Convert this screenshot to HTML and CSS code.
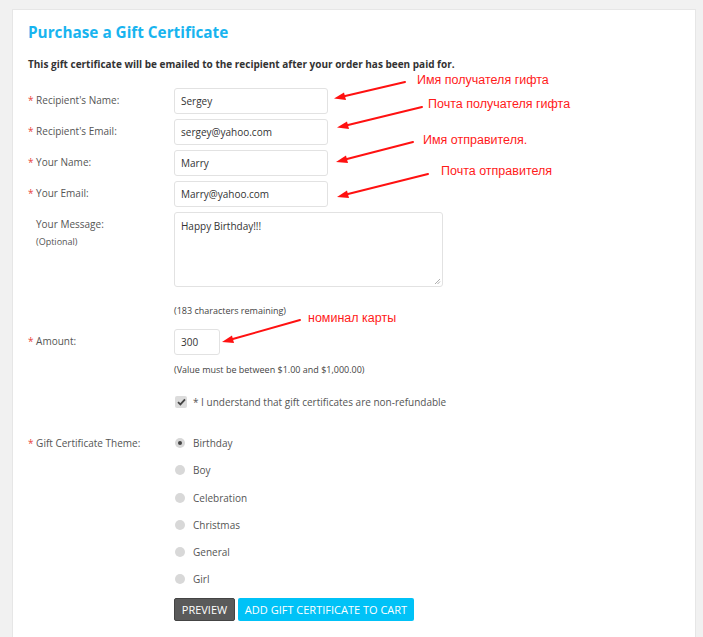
FILE: index.html
```html
<!DOCTYPE html>
<html>
<head>
<meta charset="utf-8">
<link rel="stylesheet" href="styles.css">
</head>
<body>
<div class="page">
  <div class="panel">
    <h1 class="title">Purchase a Gift Certificate</h1>
    <p class="intro">This gift certificate will be emailed to the recipient after your order has been paid for.</p>
    <div class="form">
      <div class="row row-input">
        <div class="label"><span class="req">*</span> Recipient's Name:</div>
        <div class="field"><div class="input">Sergey</div></div>
      </div>
      <div class="row row-input">
        <div class="label"><span class="req">*</span> Recipient's Email:</div>
        <div class="field"><div class="input">sergey@yahoo.com</div></div>
      </div>
      <div class="row row-input">
        <div class="label"><span class="req">*</span> Your Name:</div>
        <div class="field"><div class="input">Marry</div></div>
      </div>
      <div class="row row-input">
        <div class="label"><span class="req">*</span> Your Email:</div>
        <div class="field"><div class="input">Marry@yahoo.com</div></div>
      </div>
      <div class="row row-message">
        <div class="label label-plain">Your Message:<br><span class="opt">(Optional)</span></div>
        <div class="field">
          <div class="textarea">Happy Birthday!!!
            <svg class="grip" width="7" height="7" viewBox="0 0 7 7"><path d="M6 1 L1 6 M6 3.5 L3.5 6" stroke="#999" stroke-width="0.8"/></svg>
          </div>
          <div class="hint hint-chars">(183 characters remaining)</div>
        </div>
      </div>
      <div class="row row-amount">
        <div class="label"><span class="req">*</span> Amount:</div>
        <div class="field">
          <div class="input input-amount">300</div>
          <div class="hint hint-value">(Value must be between $1.00 and $1,000.00)</div>
          <div class="check-line">
            <span class="checkbox"><svg width="9" height="8" viewBox="0 0 9 8"><path d="M1 4.2 L3.4 6.4 L8 1.4" fill="none" stroke="#444" stroke-width="1.8"/></svg></span>
            <span class="check-text">* I understand that gift certificates are non-refundable</span>
          </div>
        </div>
      </div>
      <div class="row row-theme">
        <div class="label"><span class="req">*</span> Gift Certificate Theme:</div>
        <div class="field">
          <div class="radios">
            <div class="radio-line"><span class="radio checked"></span><span>Birthday</span></div>
            <div class="radio-line"><span class="radio"></span><span>Boy</span></div>
            <div class="radio-line"><span class="radio"></span><span>Celebration</span></div>
            <div class="radio-line"><span class="radio"></span><span>Christmas</span></div>
            <div class="radio-line"><span class="radio"></span><span>General</span></div>
            <div class="radio-line"><span class="radio"></span><span>Girl</span></div>
          </div>
          <div class="buttons">
            <span class="btn btn-preview">PREVIEW</span>
            <span class="btn btn-add">ADD GIFT CERTIFICATE TO CART</span>
          </div>
        </div>
      </div>
    </div>
  </div>

  <div class="annotations">
    <svg class="arrows" width="703" height="637" viewBox="0 0 703 637">
      <g stroke="#ff1111" stroke-width="2" fill="#ff1111" stroke-linecap="round">
        <line x1="405" y1="82" x2="343" y2="96.5"/>
        <polygon points="334,98.5 344,92.5 346,100" stroke="none"/>
        <line x1="422" y1="107" x2="346" y2="125.5"/>
        <polygon points="337,127.5 347,121.5 349,129" stroke="none"/>
        <line x1="413" y1="142" x2="345" y2="159.5"/>
        <polygon points="336,162 346,155.5 348,163" stroke="none"/>
        <line x1="428" y1="174" x2="346" y2="194.5"/>
        <polygon points="337,197 347,190.5 349,198" stroke="none"/>
        <line x1="300" y1="320" x2="231" y2="339.5"/>
        <polygon points="222,342 232,335.5 234,343" stroke="none"/>
      </g>
    </svg>
    <div class="note note-1">Имя получателя гифта</div>
    <div class="note note-2">Почта получателя гифта</div>
    <div class="note note-3">Имя отправителя.</div>
    <div class="note note-4">Почта отправителя</div>
    <div class="note note-5">номинал карты</div>
  </div>
</div>
</body>
</html>
```
FILE: styles.css
```css
* { box-sizing: border-box; }
html, body { margin: 0; padding: 0; }
body {
  background: #f1f1f1;
  font-family: "Open Sans", "DejaVu Sans", sans-serif;
  color: #555;
  width: 703px;
  height: 637px;
  overflow: hidden;
}
.page {
  position: relative;
  width: 703px;
  height: 637px;
  padding: 9px 7px 0 12px;
}
.panel {
  background: #fff;
  border: 1px solid #e6e6e6;
  border-bottom: none;
  height: 628px;
  padding: 12px 16px 0 15px;
}
.title {
  margin: 0;
  font-size: 15.3px;
  line-height: 20px;
  font-weight: 700;
  color: #18b4ef;
}
.intro {
  margin: 15px 0 0;
  font-size: 10px;
  line-height: 14px;
  font-weight: 700;
  color: #333;
}
.form {
  margin-top: 17px;
  display: flex;
  flex-direction: column;
}
.row {
  display: flex;
}
.label {
  width: 146px;
  flex: none;
  font-size: 10px;
  line-height: 14px;
  color: #555;
  padding-top: 5px;
}
.label-plain { padding-left: 8px; padding-top: 4px; line-height: 17px; }
.opt { font-size: 9px; }
.req { color: #e8453c; }
.field { flex: 1; }
.row-input { margin-bottom: 5px; }
.input {
  width: 154px;
  height: 26px;
  border: 1px solid #e2e2e2;
  border-radius: 3px;
  font-size: 10px;
  line-height: 24px;
  padding-left: 6px;
  color: #333;
}
.textarea {
  position: relative;
  width: 269px;
  height: 75px;
  border: 1px solid #e2e2e2;
  border-radius: 3px;
  font-size: 10px;
  line-height: 14px;
  padding: 6px 6px;
  color: #333;
}
.grip { position: absolute; right: 1px; bottom: 1px; }
.hint {
  font-size: 9px;
  line-height: 14px;
  color: #444;
}
.hint-chars { margin-top: 17px; }
.row-message { margin-bottom: 11px; }
.input-amount { width: 46px; }
.hint-value { margin-top: 8px; }
.check-line {
  display: flex;
  align-items: center;
  margin-top: 18px;
  font-size: 10px;
  color: #555;
}
.checkbox {
  width: 12px;
  height: 12px;
  background: #dcdcdc;
  border-radius: 2px;
  margin-left: 1px;
  margin-right: 6px;
  display: flex;
  align-items: center;
  justify-content: center;
}
.row-theme { margin-top: 27px; }
.row-theme .label { padding-top: 0; }
.radios { display: flex; flex-direction: column; }
.radio-line {
  display: flex;
  align-items: center;
  height: 14px;
  margin-bottom: 13.3px;
  font-size: 10px;
  color: #555;
}
.radio {
  width: 10px;
  height: 10px;
  border-radius: 50%;
  background: #d8d8d8;
  margin-left: 1px;
  margin-right: 8px;
  position: relative;
}
.radio.checked::after {
  content: "";
  position: absolute;
  left: 3px; top: 3px;
  width: 4px; height: 4px;
  border-radius: 50%;
  background: #444;
}
.buttons { display: flex; gap: 3px; margin-top: -2px; }
.btn {
  display: inline-block;
  height: 23px;
  line-height: 23px;
  font-size: 11px;
  color: #fff;
  border-radius: 2px;
  text-align: center;
}
.btn-preview { width: 61px; background: #5a5a5a; border: 1px solid #444; line-height: 21px; }
.btn-add { width: 176px; background: #00c2f7; }
.annotations {
  position: absolute;
  left: 0; top: 0;
  width: 703px; height: 637px;
  pointer-events: none;
}
.arrows { position: absolute; left: 0; top: 0; }
.note {
  position: absolute;
  font-family: "Liberation Sans", Arial, sans-serif;
  font-size: 12.5px;
  line-height: 14px;
  color: #ff1a1a;
  white-space: nowrap;
}
.note-1 { left: 417px; top: 73px; }
.note-2 { left: 428px; top: 97px; }
.note-3 { left: 423px; top: 133px; }
.note-4 { left: 441px; top: 164px; }
.note-5 { left: 308px; top: 311px; }
```
